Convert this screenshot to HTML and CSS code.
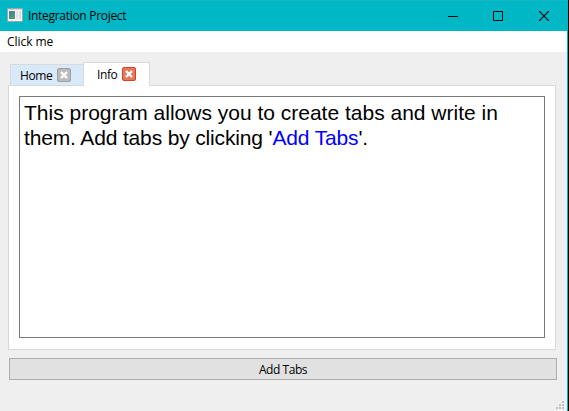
FILE: index.html
```html
<!DOCTYPE html>
<html lang="en">
<head>
<meta charset="utf-8">
<title>Integration Project</title>
<link rel="stylesheet" href="styles.css">
</head>
<body>
<div class="window">
  <header class="titlebar">
    <svg class="app-icon" width="16" height="14" viewBox="0 0 16 14">
      <defs><linearGradient id="pane" x1="0" y1="0" x2="1" y2="1"><stop offset="0" stop-color="#4b78a8"/><stop offset="1" stop-color="#55a36c"/></linearGradient></defs>
      <rect x=".5" y=".5" width="15" height="13" fill="#f5f5f5" stroke="#93aaad"/>
      <rect x="1" y="1" width="14" height="1" fill="#d5d5d8"/>
      <rect x="2" y="3" width="6" height="8" fill="url(#pane)"/>
      <rect x="9" y="3" width="2" height="8" fill="#e4e4e4"/>
      <rect x="12" y="3" width="2" height="8" fill="#dedee2"/>
    </svg>
    <span class="title">Integration Project</span>
    <div class="controls">
      <svg width="10" height="10" viewBox="0 0 10 10"><path d="M0 5.5h10" stroke="#000"/></svg>
      <svg width="10" height="10" viewBox="0 0 10 10"><path d="M.5 .5h9v9h-9z" fill="none" stroke="#000"/></svg>
      <svg class="close" width="10" height="10" viewBox="0 0 10 10"><path d="M0 0l10 10M10 0L0 10" stroke="#000" stroke-width="1.1"/></svg>
    </div>
  </header>
  <nav class="menubar"><span class="menu-label">Click me</span></nav>
  <main class="content">
    <div class="tabs">
      <div class="tab"><span class="home-label">Home</span>
        <svg width="14" height="14" viewBox="0 0 14 14"><rect x=".5" y=".5" width="13" height="13" rx="1.5" fill="#bababa" stroke="#a0a0a0"/><path d="M4 4l6 6M10 4l-6 6" stroke="#fff" stroke-width="2.4"/></svg>
      </div>
      <div class="tab active"><span class="info-label">Info</span>
        <svg width="14" height="14" viewBox="0 0 14 14"><rect x=".5" y=".5" width="13" height="13" rx="1.5" fill="#e07c5c" stroke="#d8402a"/><path d="M4 4l6 6M10 4l-6 6" stroke="#fff" stroke-width="2.4"/></svg>
      </div>
    </div>
    <section class="pane">
      <div class="editor"><div class="line first">This program allows you to create tabs and write in</div><div class="line second">them. Add tabs by clicking '<span class="link">Add Tabs</span>'.</div></div>
    </section>
    <button class="add"><span class="add-label">Add Tabs</span></button>
    <svg class="grip" width="8" height="8" viewBox="0 0 8 8"><path d="M6 0h2v2h-2zM3 3h2v2h-2zM6 3h2v2h-2zM0 6h2v2h-2zM3 6h2v2h-2zM6 6h2v2h-2z" fill="#bfbfbf"/></svg>
  </main>
</div>
</body>
</html>
```

FILE: styles.css
```css
* { box-sizing: border-box; }
body { margin: 0; background: #000; font: 12px/16px "Open Sans", "Noto Sans", sans-serif; color: #000; overflow: hidden; }
svg { display: block; flex: none; }
.window { width: 568px; height: 411px; border-right: 1px solid #00b7c3; background: #efefef; display: flex; flex-direction: column; }
.titlebar { height: 31px; flex: none; background: #00b7c6; border-top: 1px solid #18b5c2; display: flex; align-items: center; padding: 0 17px 0 7px; }
.app-icon { margin-bottom: 2px; }
.title { margin-left: 5px; white-space: nowrap; font-size: 12px; letter-spacing: -.3px; padding-bottom: 1px; }
.controls { margin-left: auto; display: flex; gap: 35px; padding-right: 1px; }
.close { margin-left: 1px; }
.menubar { height: 21px; flex: none; background: #fff; padding: 3px 7px; }
.menu-label { letter-spacing: -.05px; }
.content { flex: 1; display: flex; flex-direction: column; padding: 10px 10px 2px 8px; }
.tabs { height: 24px; display: flex; align-items: flex-end; padding-left: 2px; margin-bottom: -1px; }
.tab { height: 22px; width: 73px; border: 1px solid #d9d9d9; border-right: 0; background: #d8e9f9; display: flex; align-items: flex-start; justify-content: space-between; padding: 3px 12px 0 9px; }
.tab.active { height: 24px; width: 67px; border-right: 1px solid #d9d9d9; border-bottom: 0; background: #fff; padding: 4px 13px 0; position: relative; }
.home-label, .info-label { letter-spacing: -.4px; }
.pane { width: 548px; height: 265px; border: 1px solid #d9d9d9; background: #fff; padding: 10px; }
.editor { width: 526px; height: 242px; border: 1px solid #7a7a7a; padding: 3px 4px; font: 21px/25px "Liberation Sans", Arial, sans-serif; }
.line { white-space: nowrap; }
.second { letter-spacing: -.15px; }
.link { color: #00f; }
.add { width: 548px; height: 22px; margin: 8px 0 0 1px; padding: 2px 0 0; border: 1px solid #adadad; background: #e1e1e1; font: inherit; color: inherit; line-height: 18px; }
.add-label { letter-spacing: -.45px; }
.grip { margin: auto -7px 0 auto; }
```
